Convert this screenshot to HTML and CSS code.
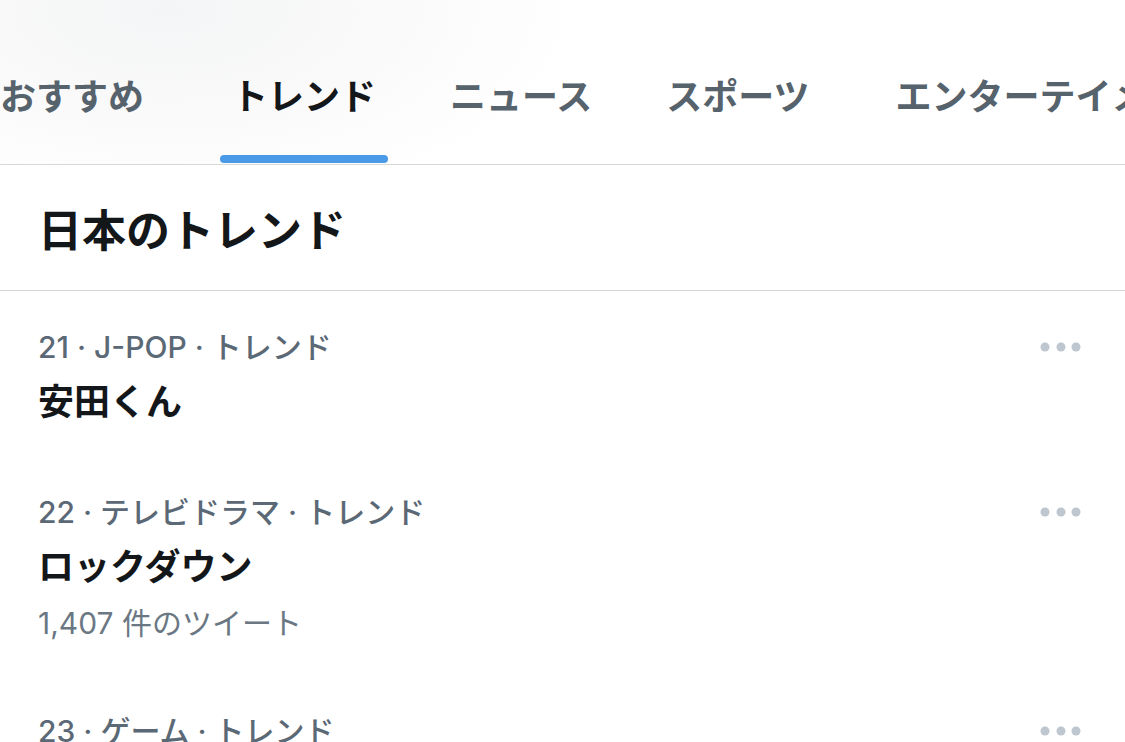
FILE: index.html
```html
<!DOCTYPE html>
<html lang="ja">
<head>
  <meta charset="UTF-8" />
  <meta name="viewport" content="width=device-width, initial-scale=1.0" />
  <title>トレンド</title>
  <link rel="stylesheet" href="styles.css">
</head>
<body>
  <nav class="tabs">
    <div class="tab">おすすめ</div>
    <div class="tab active">トレンド</div>
    <div class="tab">ニュース</div>
    <div class="tab">スポーツ</div>
    <div class="tab">エンターテイメント</div>
  </nav>
  <h1 class="section-title">日本のトレンド</h1>
  <div class="trends">
    <div class="trend">
      <div class="trend-body">
        <div class="meta">21 · J-POP · トレンド</div>
        <div class="name">安田くん</div>
      </div>
      <div class="more">
        <svg width="42" height="10" viewBox="0 0 42 10"><circle cx="5" cy="5" r="4.5"/><circle cx="21" cy="5" r="4.5"/><circle cx="36" cy="5" r="4.5"/></svg>
      </div>
    </div>
    <div class="trend">
      <div class="trend-body">
        <div class="meta">22 · テレビドラマ · トレンド</div>
        <div class="name">ロックダウン</div>
        <div class="count">1,407 件のツイート</div>
      </div>
      <div class="more">
        <svg width="42" height="10" viewBox="0 0 42 10"><circle cx="5" cy="5" r="4.5"/><circle cx="21" cy="5" r="4.5"/><circle cx="36" cy="5" r="4.5"/></svg>
      </div>
    </div>
    <div class="trend">
      <div class="trend-body">
        <div class="meta">23 · ゲーム · トレンド</div>
        <div class="name">スプラトゥーン</div>
      </div>
      <div class="more">
        <svg width="42" height="10" viewBox="0 0 42 10"><circle cx="5" cy="5" r="4.5"/><circle cx="21" cy="5" r="4.5"/><circle cx="36" cy="5" r="4.5"/></svg>
      </div>
    </div>
  </div>
</body>
</html>
```

FILE: styles.css
```css
body {
  margin: 0;
  font-family: "Liberation Sans", "Noto Sans CJK JP", sans-serif;
  background: #fff;
  color: #14171a;
  overflow: hidden;
}
.tabs {
  display: flex;
  gap: 50px;
  height: 164px;
  margin-left: -12px;
  border-bottom: 1px solid #d8d8d8;
  white-space: nowrap;
  overflow: hidden;
  background: radial-gradient(ellipse 420px 200px at 180px 10px, #f4f5f6, #fafafa 55%, #fff 100%);
}
.tab {
  position: relative;
  display: flex;
  align-items: center;
  padding: 24px 12px 0;
  font-size: 36px;
  font-weight: bold;
  color: #56626c;
}
.tab.active {
  margin-left: 14px;
  color: #14171a;
}
.tab:last-child {
  margin-left: 12px;
}
.tab.active::after {
  content: "";
  position: absolute;
  left: 0;
  right: 0;
  bottom: 1px;
  height: 8px;
  border-radius: 4px;
  background: #4a9ae8;
}
.section-title {
  margin: 0;
  height: 125px;
  display: flex;
  align-items: center;
  padding: 0 38px;
  font-size: 44px;
  font-weight: bold;
  border-bottom: 1px solid #d8d8d8;
}
.trend {
  display: flex;
  justify-content: space-between;
  padding: 28px 43px 25px 38px;
}
.meta {
  font-family: Inter, "Noto Sans CJK JP", sans-serif;
  font-size: 30px;
  line-height: 56px;
  height: 56px;
  font-weight: 500;
  color: #5b6875;
  white-space: nowrap;
}
.name {
  font-size: 36px;
  line-height: 56px;
  height: 56px;
  font-weight: bold;
}
.count {
  font-family: Inter, "Noto Sans CJK JP", sans-serif;
  font-size: 30px;
  line-height: 54px;
  height: 54px;
  color: #6b7884;
}
.more {
  height: 56px;
  display: flex;
  align-items: center;
}
.more svg {
  fill: #bec7cf;
}
```
